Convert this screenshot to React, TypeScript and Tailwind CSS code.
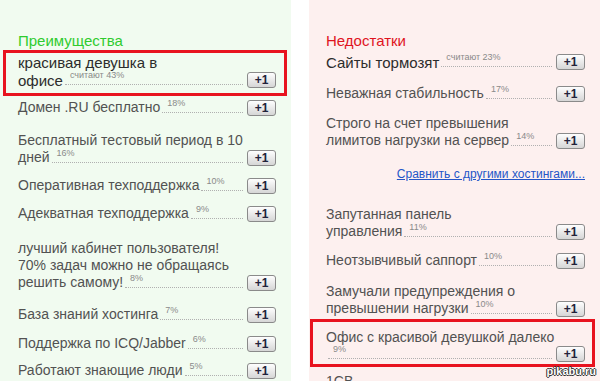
type Item = {
  lines?: string[];
  last: string;
  pct: string;
  mt: string;
  big?: boolean;
};

const pros: Item[] = [
  { lines: ["Бесплатный тестовый период в 10"], last: "дней", pct: "16%", mt: "mt-[16px]" },
  { last: "Оперативная техподдержка", pct: "10%", mt: "mt-[11px]" },
  { last: "Адекватная техподдержка", pct: "9%", mt: "mt-[11px]" },
  {
    lines: ["лучший кабинет пользователя!", "70% задач можно не обращаясь"],
    last: "решить самому!",
    pct: "8%",
    mt: "mt-[18px]",
  },
  { last: "База знаний хостинга", pct: "7%", mt: "mt-[15px]" },
  { last: "Поддержка по ICQ/Jabber", pct: "6%", mt: "mt-[12px]" },
  { last: "Работают знающие люди", pct: "5%", mt: "mt-[10px]" },
];

function PlusOne({ big }: { big?: boolean }) {
  return (
    <button
      className={`ml-[4px] flex h-[16px] w-[29px] shrink-0 items-center justify-center rounded-[3px] border border-[#8a8a8a] bg-linear-to-b from-[#fefefe] to-[#d6d6d6] text-[12px] font-bold leading-none text-[#22223a] ${
        big ? "mb-[2px]" : "mb-0"
      }`}
    >
      +1
    </button>
  );
}

function Row({ item }: { item: Item }) {
  const size = item.big
    ? "text-[15px] leading-[18px] text-[#2c2c2c]"
    : "text-[14px] leading-[17px] text-[#525252]";
  return (
    <div className={`${item.mt} ${size}`}>
      {item.lines?.map((l) => (
        <div key={l} className="whitespace-nowrap">
          {l}
        </div>
      ))}
      <div className="flex items-end">
        {item.last && <span className="whitespace-nowrap">{item.last}</span>}
        <span
          className={`relative ml-[2px] h-[13px] flex-1 border-b border-dotted border-[#b0b0b0] ${
            item.big ? "mb-[5px]" : "mb-[3px]"
          }`}
        >
          <span className="absolute -top-[1px] left-[5px] whitespace-nowrap text-[9px] leading-none text-[#8a8a8a]">
            {item.pct}
          </span>
        </span>
        <PlusOne big={item.big} />
      </div>
    </div>
  );
}

const cons1: Item[] = [
  { last: "Неважная стабильность", pct: "17%", mt: "mt-[13px]" },
  {
    lines: ["Строго на счет превышения"],
    last: "лимитов нагрузки на сервер",
    pct: "14%",
    mt: "mt-[13px]",
  },
];

const cons2: Item[] = [
  { lines: ["Запутанная панель"], last: "управления", pct: "11%", mt: "mt-[24px]" },
  { last: "Неотзывчивый саппорт", pct: "10%", mt: "mt-[12px]" },
  {
    lines: ["Замучали предупреждения о"],
    last: "превышении нагрузки",
    pct: "10%",
    mt: "mt-[14px]",
  },
];

export default function App() {
  return (
    <div className="relative flex h-[381px] w-[600px] overflow-hidden bg-white font-['Liberation_Sans',Arial,sans-serif]">
      {/* плюсы */}
      <div className="w-[291px] bg-[#f1fbf0] pl-[18px] pr-[15px] pt-[32px]">
        <h2 className="text-[15px] leading-[18px] text-[#2fcb2f]">Преимущества</h2>
        <div className="-ml-[15px] -mr-[11px] border-[3px] border-[#e8131f] pb-[3px] pl-[12px] pr-[8px] pt-[1px]">
          <Row
            item={{
              lines: ["красивая девушка в"],
              last: "офисе",
              pct: "считают 43%",
              mt: "mt-0",
              big: true,
            }}
          />
        </div>
        <Row item={{ last: "Домен .RU бесплатно", pct: "18%", mt: "mt-[3px]" }} />
        {pros.map((p) => (
          <Row key={p.last} item={p} />
        ))}
      </div>

      {/* минусы */}
      <div className="ml-[18px] flex-1 bg-[#fdf0ef] pl-[17px] pr-[15px] pt-[32px]">
        <h2 className="text-[15px] leading-[18px] text-[#e0141e]">Недостатки</h2>
        <Row item={{ last: "Сайты тормозят", pct: "считают 23%", mt: "mt-[4px]", big: true }} />
        {cons1.map((c) => (
          <Row key={c.last} item={c} />
        ))}
        <div className="mt-[18px] text-right text-[12px] leading-[15px]">
          <a href="#" className="text-[#2456c8] underline">
            Сравнить с другими хостингами...
          </a>
        </div>
        {cons2.map((c) => (
          <Row key={c.last} item={c} />
        ))}
        <div className="-ml-[16px] -mr-[10px] mt-[2px] border-[3px] border-[#e8131f] pb-[2px] pl-[13px] pr-[7px] pt-[7px]">
          <Row item={{ lines: ["Офис с красивой девушкой далеко"], last: "", pct: "9%", mt: "mt-0" }} />
        </div>
        <div className="mt-[6px] text-[14px] leading-[17px] text-[#525252]">1СВ</div>
      </div>

      <span className="absolute bottom-[4px] right-[4px] text-[11px] font-bold leading-none text-white [text-shadow:-1px_0_#333,1px_0_#333,0_-1px_#333,0_1px_#333]">
        pikabu.ru
      </span>
    </div>
  );
}
